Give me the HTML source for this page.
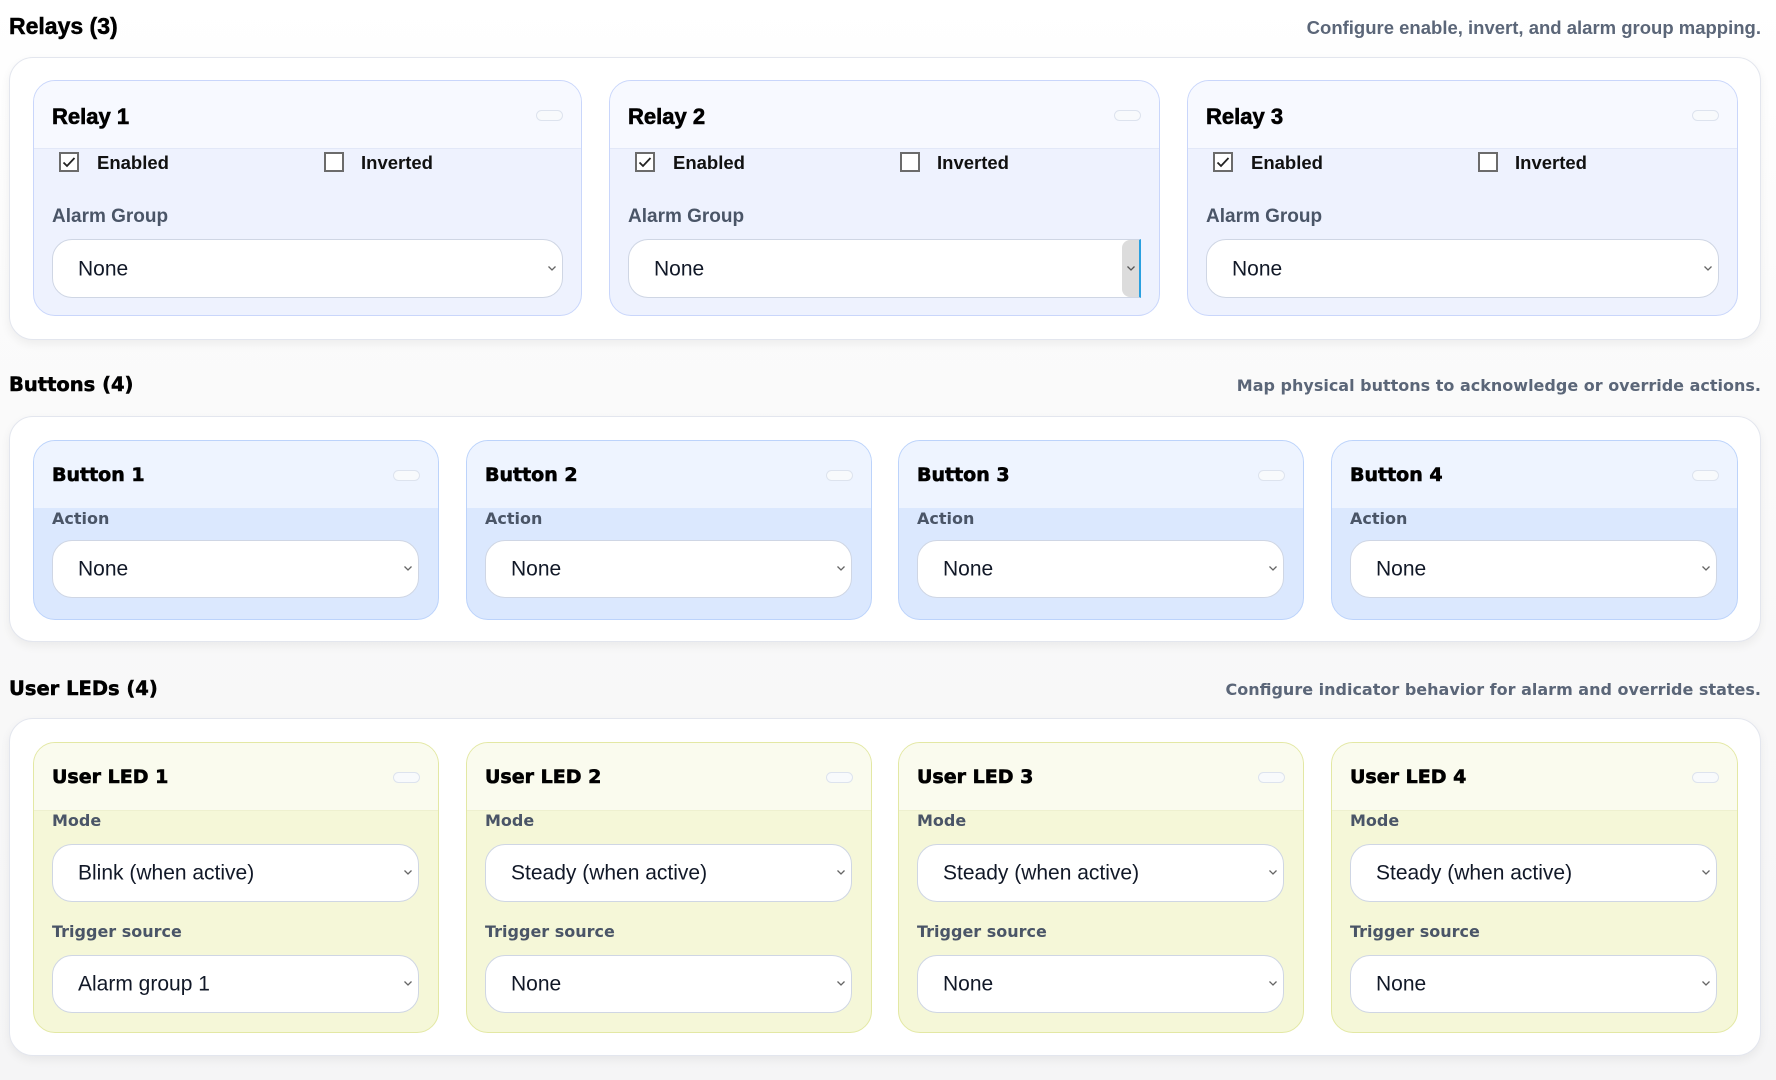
<!DOCTYPE html>
<html><head><meta charset="utf-8"><style>
*{box-sizing:border-box;margin:0;padding:0}
body{width:1776px;height:1080px;position:relative;overflow:hidden;background:linear-gradient(#ffffff 0,#fbfbfb 300px,#f5f5f6 1080px);font-family:"Liberation Sans",sans-serif;color:#0b0f1a}
.abs{position:absolute}
.sh{position:absolute;left:9px;font-weight:bold;color:#000;white-space:nowrap;line-height:1;-webkit-text-stroke:0.5px #000}
.sub{position:absolute;right:15px;font-weight:bold;color:#5b6678;white-space:nowrap;line-height:1}
.panel{position:absolute;left:9px;width:1752px;background:#fff;border:1px solid #e3e6ee;border-radius:24px;box-shadow:0 4px 10px rgba(0,0,0,.06)}
.card{position:absolute;border-radius:22px;overflow:hidden;border:1.5px solid}
.hd{position:absolute;left:0;right:0;top:0}
.ttl{position:absolute;left:18px;font-weight:bold;color:#000;white-space:nowrap;line-height:1;-webkit-text-stroke:0.6px #000}
.pill{position:absolute;right:18px;top:29px;width:27px;height:11px;border-radius:6px;border:1px solid #dde3ee;background:#f8fafc}
.lbl{position:absolute;left:18px;font-weight:bold;color:#4a5567;white-space:nowrap;line-height:1}
.sel{position:absolute;left:18px;background:#fff;border:1.5px solid #cfd6e4;border-radius:20px;font-size:21px;color:#111827;line-height:1}
.sel span{position:absolute;left:25px;top:50%;transform:translateY(-50%)}
.sel svg{position:absolute;right:5px;top:50%;margin-top:-4px}
.cb{position:absolute;width:20px;height:20px;border:2px solid #6b6b6b;background:#fff}
.cbt{position:absolute;font-weight:bold;font-size:18.5px;color:#111;line-height:1}
.dv{font-family:"DejaVu Sans",sans-serif}
.relay{border-color:#c9d6fb;background:#eef2fe}
.relay .hd{height:68px;background:#f7f9ff;border-bottom:1px solid #e2e8f8}
.btn{border-color:#bcd3fb;background:#dbe8fe}
.btn .hd{height:67px;background:#eef4ff}
.led{border-color:#e3e8a4;background:#f5f7d8}
.led .hd{height:68px;background:#fafbee;border-bottom:1px solid #eef0cf}
</style></head><body>

<div class="sh" style="top:15px;font-size:23px">Relays (3)</div>
<div class="sub" style="top:19px;font-size:18.5px">Configure enable, invert, and alarm group mapping.</div>
<div class="panel" style="top:57px;height:283px"></div>

<!-- relays -->
<div class="card relay" style="left:33px;top:80px;width:549px;height:236px">
 <div class="hd"></div><div class="ttl" style="top:25px;font-size:22px">Relay 1</div><div class="pill"></div>
 <div class="cb" style="left:25px;top:71px"><svg width="16" height="16" viewBox="0 0 16 16"><path d="M2.5 8.5l3.5 3.5 7.5-8" fill="none" stroke="#222" stroke-width="1.8"/></svg></div><div class="cbt" style="left:63px;top:73px">Enabled</div>
 <div class="cb" style="left:290px;top:71px"></div><div class="cbt" style="left:327px;top:73px">Inverted</div>
 <div class="lbl" style="top:126px;font-size:19px">Alarm Group</div>
 <div class="sel" style="top:158px;width:511px;height:59px"><span>None</span><svg width="10" height="7" viewBox="0 0 10 7"><path d="M1.5 1.5l3.5 3.5 3.5-3.5" fill="none" stroke="#666" stroke-width="1.3"/></svg></div>
</div>
<div class="card relay" style="left:609px;top:80px;width:551px;height:236px">
 <div class="hd"></div><div class="ttl" style="top:25px;font-size:22px">Relay 2</div><div class="pill"></div>
 <div class="cb" style="left:25px;top:71px"><svg width="16" height="16" viewBox="0 0 16 16"><path d="M2.5 8.5l3.5 3.5 7.5-8" fill="none" stroke="#222" stroke-width="1.8"/></svg></div><div class="cbt" style="left:63px;top:73px">Enabled</div>
 <div class="cb" style="left:290px;top:71px"></div><div class="cbt" style="left:327px;top:73px">Inverted</div>
 <div class="lbl" style="top:126px;font-size:19px">Alarm Group</div>
 <div class="sel" style="top:158px;width:513px;height:59px;border-radius:20px 0 0 20px;border-right:2px solid #2aa0e0;overflow:hidden"><span>None</span><div class="abs" style="right:0;top:0;width:17px;height:100%;background:#dcdcdc;border-radius:8px 0 0 8px"></div><svg width="10" height="7" viewBox="0 0 10 7" style="right:3px"><path d="M1.5 1.5l3.5 3.5 3.5-3.5" fill="none" stroke="#555" stroke-width="1.3"/></svg></div>
</div>
<div class="card relay" style="left:1187px;top:80px;width:551px;height:236px">
 <div class="hd"></div><div class="ttl" style="top:25px;font-size:22px">Relay 3</div><div class="pill"></div>
 <div class="cb" style="left:25px;top:71px"><svg width="16" height="16" viewBox="0 0 16 16"><path d="M2.5 8.5l3.5 3.5 7.5-8" fill="none" stroke="#222" stroke-width="1.8"/></svg></div><div class="cbt" style="left:63px;top:73px">Enabled</div>
 <div class="cb" style="left:290px;top:71px"></div><div class="cbt" style="left:327px;top:73px">Inverted</div>
 <div class="lbl" style="top:126px;font-size:19px">Alarm Group</div>
 <div class="sel" style="top:158px;width:513px;height:59px"><span>None</span><svg width="10" height="7" viewBox="0 0 10 7"><path d="M1.5 1.5l3.5 3.5 3.5-3.5" fill="none" stroke="#666" stroke-width="1.3"/></svg></div>
</div>

<!-- buttons -->
<div class="sh dv" style="top:375px;font-size:19.5px">Buttons (4)</div>
<div class="sub dv" style="top:378px;font-size:16px">Map physical buttons to acknowledge or override actions.</div>
<div class="panel" style="top:416px;height:226px"></div>

<div class="card btn" style="left:33px;top:440px;width:406px;height:180px"><div class="hd"></div><div class="ttl dv" style="top:25px;font-size:19px">Button 1</div><div class="pill"></div><div class="lbl dv" style="top:70px;font-size:16px">Action</div><div class="sel" style="top:99px;width:367px;height:58px"><span>None</span><svg width="10" height="7" viewBox="0 0 10 7"><path d="M1.5 1.5l3.5 3.5 3.5-3.5" fill="none" stroke="#666" stroke-width="1.3"/></svg></div></div>
<div class="card btn" style="left:466px;top:440px;width:406px;height:180px"><div class="hd"></div><div class="ttl dv" style="top:25px;font-size:19px">Button 2</div><div class="pill"></div><div class="lbl dv" style="top:70px;font-size:16px">Action</div><div class="sel" style="top:99px;width:367px;height:58px"><span>None</span><svg width="10" height="7" viewBox="0 0 10 7"><path d="M1.5 1.5l3.5 3.5 3.5-3.5" fill="none" stroke="#666" stroke-width="1.3"/></svg></div></div>
<div class="card btn" style="left:898px;top:440px;width:406px;height:180px"><div class="hd"></div><div class="ttl dv" style="top:25px;font-size:19px">Button 3</div><div class="pill"></div><div class="lbl dv" style="top:70px;font-size:16px">Action</div><div class="sel" style="top:99px;width:367px;height:58px"><span>None</span><svg width="10" height="7" viewBox="0 0 10 7"><path d="M1.5 1.5l3.5 3.5 3.5-3.5" fill="none" stroke="#666" stroke-width="1.3"/></svg></div></div>
<div class="card btn" style="left:1331px;top:440px;width:407px;height:180px"><div class="hd"></div><div class="ttl dv" style="top:25px;font-size:19px">Button 4</div><div class="pill"></div><div class="lbl dv" style="top:70px;font-size:16px">Action</div><div class="sel" style="top:99px;width:367px;height:58px"><span>None</span><svg width="10" height="7" viewBox="0 0 10 7"><path d="M1.5 1.5l3.5 3.5 3.5-3.5" fill="none" stroke="#666" stroke-width="1.3"/></svg></div></div>

<!-- leds -->
<div class="sh dv" style="top:679px;font-size:19.5px">User LEDs (4)</div>
<div class="sub dv" style="top:682px;font-size:16px">Configure indicator behavior for alarm and override states.</div>
<div class="panel" style="top:718px;height:338px"></div>

<div class="card led" style="left:33px;top:742px;width:406px;height:291px"><div class="hd"></div><div class="ttl dv" style="top:25px;font-size:19px">User LED 1</div><div class="pill"></div>
 <div class="lbl dv" style="top:70px;font-size:16px">Mode</div><div class="sel" style="top:101px;width:367px;height:58px"><span>Blink (when active)</span><svg width="10" height="7" viewBox="0 0 10 7"><path d="M1.5 1.5l3.5 3.5 3.5-3.5" fill="none" stroke="#666" stroke-width="1.3"/></svg></div>
 <div class="lbl dv" style="top:181px;font-size:16px">Trigger source</div><div class="sel" style="top:212px;width:367px;height:58px"><span>Alarm group 1</span><svg width="10" height="7" viewBox="0 0 10 7"><path d="M1.5 1.5l3.5 3.5 3.5-3.5" fill="none" stroke="#666" stroke-width="1.3"/></svg></div></div>
<div class="card led" style="left:466px;top:742px;width:406px;height:291px"><div class="hd"></div><div class="ttl dv" style="top:25px;font-size:19px">User LED 2</div><div class="pill"></div>
 <div class="lbl dv" style="top:70px;font-size:16px">Mode</div><div class="sel" style="top:101px;width:367px;height:58px"><span>Steady (when active)</span><svg width="10" height="7" viewBox="0 0 10 7"><path d="M1.5 1.5l3.5 3.5 3.5-3.5" fill="none" stroke="#666" stroke-width="1.3"/></svg></div>
 <div class="lbl dv" style="top:181px;font-size:16px">Trigger source</div><div class="sel" style="top:212px;width:367px;height:58px"><span>None</span><svg width="10" height="7" viewBox="0 0 10 7"><path d="M1.5 1.5l3.5 3.5 3.5-3.5" fill="none" stroke="#666" stroke-width="1.3"/></svg></div></div>
<div class="card led" style="left:898px;top:742px;width:406px;height:291px"><div class="hd"></div><div class="ttl dv" style="top:25px;font-size:19px">User LED 3</div><div class="pill"></div>
 <div class="lbl dv" style="top:70px;font-size:16px">Mode</div><div class="sel" style="top:101px;width:367px;height:58px"><span>Steady (when active)</span><svg width="10" height="7" viewBox="0 0 10 7"><path d="M1.5 1.5l3.5 3.5 3.5-3.5" fill="none" stroke="#666" stroke-width="1.3"/></svg></div>
 <div class="lbl dv" style="top:181px;font-size:16px">Trigger source</div><div class="sel" style="top:212px;width:367px;height:58px"><span>None</span><svg width="10" height="7" viewBox="0 0 10 7"><path d="M1.5 1.5l3.5 3.5 3.5-3.5" fill="none" stroke="#666" stroke-width="1.3"/></svg></div></div>
<div class="card led" style="left:1331px;top:742px;width:407px;height:291px"><div class="hd"></div><div class="ttl dv" style="top:25px;font-size:19px">User LED 4</div><div class="pill"></div>
 <div class="lbl dv" style="top:70px;font-size:16px">Mode</div><div class="sel" style="top:101px;width:367px;height:58px"><span>Steady (when active)</span><svg width="10" height="7" viewBox="0 0 10 7"><path d="M1.5 1.5l3.5 3.5 3.5-3.5" fill="none" stroke="#666" stroke-width="1.3"/></svg></div>
 <div class="lbl dv" style="top:181px;font-size:16px">Trigger source</div><div class="sel" style="top:212px;width:367px;height:58px"><span>None</span><svg width="10" height="7" viewBox="0 0 10 7"><path d="M1.5 1.5l3.5 3.5 3.5-3.5" fill="none" stroke="#666" stroke-width="1.3"/></svg></div></div>

</body></html>
